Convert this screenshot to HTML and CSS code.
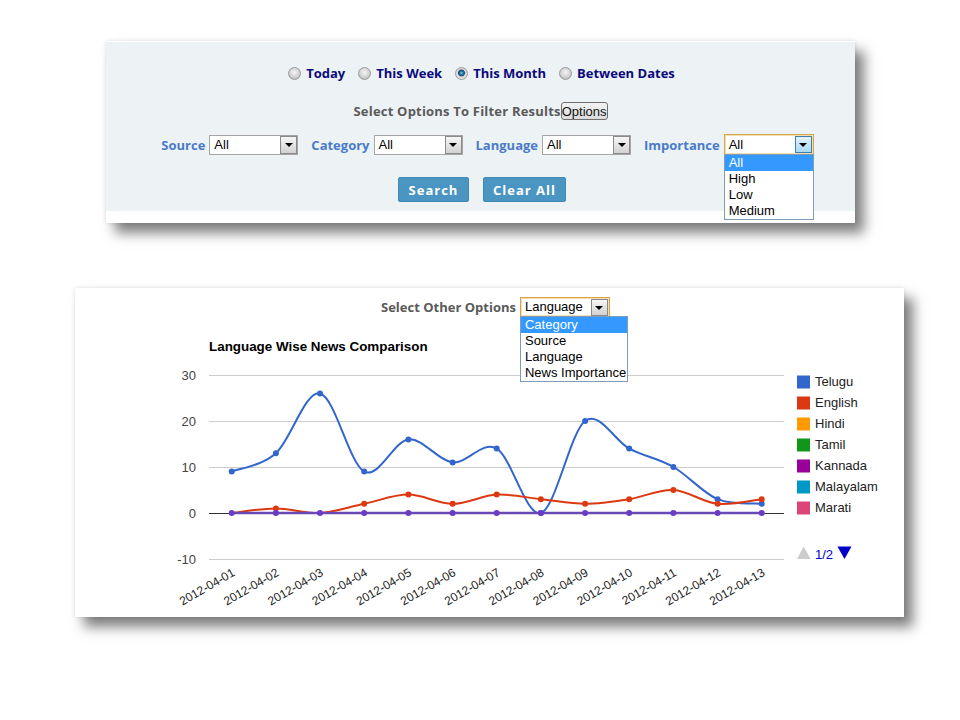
FILE: index.html
```html
<!DOCTYPE html>
<html>
<head>
<meta charset="utf-8">
<title>News Filter</title>
<link rel="stylesheet" href="styles.css">
</head>
<body>
<div class="page">
<div class="card filter-card">
  <div class="panel">
    <div class="radios">
      <span class="radio"></span><span class="rlabel">Today</span>
      <span class="radio"></span><span class="rlabel">This Week</span>
      <span class="radio checked"></span><span class="rlabel">This Month</span>
      <span class="radio"></span><span class="rlabel">Between Dates</span>
    </div>
    <div class="opt-row">
      <span class="opt-label">Select Options To Filter Results</span><button class="opt-btn">Options</button>
    </div>
    <div class="filters">
      <span class="flabel">Source</span>
      <div class="sel"><span class="val">All</span><span class="arr"></span></div>
      <span class="flabel">Category</span>
      <div class="sel"><span class="val">All</span><span class="arr"></span></div>
      <span class="flabel">Language</span>
      <div class="sel"><span class="val">All</span><span class="arr"></span></div>
      <span class="flabel">Importance</span>
      <div class="sel focus open"><span class="val">All</span><span class="arr"></span>
        <ul class="dd">
          <li class="hl">All</li>
          <li>High</li>
          <li>Low</li>
          <li>Medium</li>
        </ul>
      </div>
    </div>
    <div class="actions">
      <button class="btn btn-search">Search</button>
      <button class="btn btn-clear">Clear All</button>
    </div>
  </div>
</div>

<div class="card chart-card">
  <div class="head">
    <span class="head-label">Select Other Options</span>
    <div class="sel focus plain"><span class="val">Language</span><span class="arr"></span>
      <ul class="dd wide">
        <li class="hl">Category</li>
        <li>Source</li>
        <li>Language</li>
        <li>News Importance</li>
      </ul>
    </div>
  </div>
  <svg class="chart" width="829" height="300" viewBox="75 317 829 300" xmlns="http://www.w3.org/2000/svg">
    <text class="ttl" x="209" y="351">Language Wise News Comparison</text>
    <g stroke="#cccccc" stroke-width="1">
      <line x1="209" y1="375.5" x2="784" y2="375.5"/>
      <line x1="209" y1="421.5" x2="784" y2="421.5"/>
      <line x1="209" y1="467.5" x2="784" y2="467.5"/>
      <line x1="209" y1="559.5" x2="784" y2="559.5"/>
    </g>
    <line x1="209" y1="513.5" x2="784" y2="513.5" stroke="#333333" stroke-width="1"/>
    <g class="ylab" text-anchor="end">
      <text x="196" y="380">30</text>
      <text x="196" y="426">20</text>
      <text x="196" y="472">10</text>
      <text x="196" y="518">0</text>
      <text x="196" y="564">-10</text>
    </g>
    <path fill="none" stroke="#3366cc" stroke-width="2" d="M231.7,471.6 C239.1,468.5 261.2,466.2 275.9,453.2 C290.6,440.2 305.3,390.3 320.0,393.4 C334.7,396.5 349.5,463.9 364.2,471.6 C378.9,479.3 393.7,440.9 408.4,439.4 C423.1,437.9 437.9,460.9 452.6,462.4 C467.3,463.9 482.0,440.2 496.7,448.6 C511.4,457.0 526.2,517.6 540.9,513 C555.6,508.4 570.4,431.7 585.1,421 C599.8,410.3 614.5,440.9 629.2,448.6 C643.9,456.3 658.7,458.6 673.4,467 C688.1,475.4 702.9,493.1 717.6,499.2 C732.3,505.3 754.3,503.0 761.7,503.8"/>
    <g fill="#3366cc">
      <circle cx="231.7" cy="471.6" r="3"/><circle cx="275.9" cy="453.2" r="3"/><circle cx="320.0" cy="393.4" r="3"/><circle cx="364.2" cy="471.6" r="3"/><circle cx="408.4" cy="439.4" r="3"/><circle cx="452.6" cy="462.4" r="3"/><circle cx="496.7" cy="448.6" r="3"/><circle cx="540.9" cy="513" r="3"/><circle cx="585.1" cy="421" r="3"/><circle cx="629.2" cy="448.6" r="3"/><circle cx="673.4" cy="467" r="3"/><circle cx="717.6" cy="499.2" r="3"/><circle cx="761.7" cy="503.8" r="3"/>
    </g>
    <path fill="none" stroke="#dc3912" stroke-width="2" d="M231.7,513 C239.1,512.2 261.2,508.4 275.9,508.4 C290.6,508.4 305.3,513.8 320.0,513 C334.7,512.2 349.5,506.9 364.2,503.8 C378.9,500.7 393.7,494.6 408.4,494.6 C423.1,494.6 437.9,503.8 452.6,503.8 C467.3,503.8 482.0,495.4 496.7,494.6 C511.4,493.8 526.2,497.7 540.9,499.2 C555.6,500.7 570.4,503.8 585.1,503.8 C599.8,503.8 614.5,501.5 629.2,499.2 C643.9,496.9 658.7,489.2 673.4,490 C688.1,490.8 702.9,502.3 717.6,503.8 C732.3,505.3 754.3,500.0 761.7,499.2"/>
    <g fill="#dc3912">
      <circle cx="275.9" cy="508.4" r="3"/><circle cx="364.2" cy="503.8" r="3"/><circle cx="408.4" cy="494.6" r="3"/><circle cx="452.6" cy="503.8" r="3"/><circle cx="496.7" cy="494.6" r="3"/><circle cx="540.9" cy="499.2" r="3"/><circle cx="585.1" cy="503.8" r="3"/><circle cx="629.2" cy="499.2" r="3"/><circle cx="673.4" cy="490" r="3"/><circle cx="717.6" cy="503.8" r="3"/><circle cx="761.7" cy="499.2" r="3"/>
    </g>
    <line x1="231.7" y1="513" x2="761.7" y2="513" stroke="#6a48b6" stroke-width="2.5"/>
    <g fill="#6a3cc6">
      <circle cx="231.7" cy="513" r="3"/><circle cx="275.9" cy="513" r="3"/><circle cx="320.0" cy="513" r="3"/><circle cx="364.2" cy="513" r="3"/><circle cx="408.4" cy="513" r="3"/><circle cx="452.6" cy="513" r="3"/><circle cx="496.7" cy="513" r="3"/><circle cx="540.9" cy="513" r="3"/><circle cx="585.1" cy="513" r="3"/><circle cx="629.2" cy="513" r="3"/><circle cx="673.4" cy="513" r="3"/><circle cx="717.6" cy="513" r="3"/><circle cx="761.7" cy="513" r="3"/>
    </g>
    <g class="xlab" text-anchor="end">
      <text x="235.7" y="575" transform="rotate(-30 235.7 575)">2012-04-01</text>
      <text x="279.9" y="575" transform="rotate(-30 279.9 575)">2012-04-02</text>
      <text x="324.0" y="575" transform="rotate(-30 324.0 575)">2012-04-03</text>
      <text x="368.2" y="575" transform="rotate(-30 368.2 575)">2012-04-04</text>
      <text x="412.4" y="575" transform="rotate(-30 412.4 575)">2012-04-05</text>
      <text x="456.6" y="575" transform="rotate(-30 456.6 575)">2012-04-06</text>
      <text x="500.7" y="575" transform="rotate(-30 500.7 575)">2012-04-07</text>
      <text x="544.9" y="575" transform="rotate(-30 544.9 575)">2012-04-08</text>
      <text x="589.1" y="575" transform="rotate(-30 589.1 575)">2012-04-09</text>
      <text x="633.2" y="575" transform="rotate(-30 633.2 575)">2012-04-10</text>
      <text x="677.4" y="575" transform="rotate(-30 677.4 575)">2012-04-11</text>
      <text x="721.6" y="575" transform="rotate(-30 721.6 575)">2012-04-12</text>
      <text x="765.7" y="575" transform="rotate(-30 765.7 575)">2012-04-13</text>
    </g>
    <g class="legend">
      <rect x="797" y="375.5" width="13" height="13" fill="#3366cc"/><text x="815" y="386">Telugu</text>
      <rect x="797" y="396.5" width="13" height="13" fill="#dc3912"/><text x="815" y="407">English</text>
      <rect x="797" y="417.5" width="13" height="13" fill="#ff9900"/><text x="815" y="428">Hindi</text>
      <rect x="797" y="438.5" width="13" height="13" fill="#109618"/><text x="815" y="449">Tamil</text>
      <rect x="797" y="459.5" width="13" height="13" fill="#990099"/><text x="815" y="470">Kannada</text>
      <rect x="797" y="480.5" width="13" height="13" fill="#0099c6"/><text x="815" y="491">Malayalam</text>
      <rect x="797" y="501.5" width="13" height="13" fill="#dd4477"/><text x="815" y="512">Marati</text>
    </g>
    <polygon points="797,559 810.5,559 803.7,546.5" fill="#cccccc"/>
    <text class="pager" x="815" y="558.5">1/2</text>
    <polygon points="837.5,546.5 851.5,546.5 844.5,559" fill="#0000cc"/>
  </svg>
</div>
</div>
</body>
</html>
```

FILE: styles.css
```css
html,
body {
  margin: 0;
  background: #ffffff;
  font-family: "Liberation Sans", Arial, sans-serif;
}

.page {
  padding: 41px 0 80px;
  min-height: 720px;
  box-sizing: border-box;
}

.card {
  background: #ffffff;
  box-shadow: 9px 10px 12px rgba(0, 0, 0, 0.5), 0 0 4px rgba(0, 0, 0, 0.12);
}

/* ---------- top filter card ---------- */
.filter-card {
  width: 749px;
  margin-left: 106px;
  padding: 1px 0 12px 0;
}

.panel {
  background: #edf2f5;
  padding: 22px 0 9px;
}

.radios {
  display: flex;
  justify-content: center;
  align-items: center;
  height: 18px;
  padding-left: 2px;
}

.radio {
  width: 13px;
  height: 13px;
  box-sizing: border-box;
  border-radius: 50%;
  border: 1px solid #9a9a9a;
  background: radial-gradient(circle at 50% 40%, #f4f4f4 0, #d8d8d8 4px, #c4c4c4 6px);
  margin-right: 5px;
}

.radio.checked {
  background: radial-gradient(circle at 50% 45%, #8fd0f0 0, #2a7fae 1.5px, #0f4770 3px, #d2d2d2 3.8px, #e6e6e6 6px);
}

.rlabel {
  font-family: "Open Sans", "DejaVu Sans", sans-serif;
  font-weight: 700;
  font-size: 13px;
  line-height: 18px;
  color: #0a0a7c;
  margin-right: 13px;
}

.rlabel:last-child {
  margin-right: 0;
}

.opt-row {
  display: flex;
  justify-content: center;
  align-items: center;
  height: 18px;
  margin-top: 20px;
}

.opt-label {
  font-family: "Open Sans", "DejaVu Sans", sans-serif;
  font-weight: 700;
  font-size: 13px;
  line-height: 18px;
  letter-spacing: 0.2px;
  color: #5a5a5a;
}

.opt-btn {
  height: 18px;
  box-sizing: border-box;
  padding: 0;
  margin: 0;
  border: 1px solid #6f6f6f;
  border-radius: 3px;
  background: linear-gradient(#f2f2f2, #dcdcdc);
  font-family: "Liberation Sans", Arial, sans-serif;
  font-size: 13px;
  line-height: 15px;
  color: #111111;
}

.filters {
  display: flex;
  justify-content: center;
  align-items: center;
  height: 21px;
  margin-top: 14px;
  padding-left: 14px;
}

.flabel {
  font-family: "Open Sans", "DejaVu Sans", sans-serif;
  font-weight: 700;
  font-size: 13px;
  line-height: 18px;
  color: #4a7bc9;
  margin-right: 4px;
}

.sel {
  position: relative;
  width: 89px;
  height: 20px;
  box-sizing: border-box;
  border: 1px solid #a5a5a5;
  background: #ffffff;
  display: flex;
  align-items: center;
  margin-right: 13px;
  font-family: "Liberation Sans", Arial, sans-serif;
  font-size: 13px;
  color: #000000;
}

.sel .val {
  flex: 1;
  padding-left: 4px;
  line-height: 16px;
}

.sel .arr {
  width: 17px;
  height: 18px;
  box-sizing: border-box;
  border: 1px solid #8a8a8a;
  background: linear-gradient(#f6f6f6, #d2d2d2);
  display: flex;
  align-items: center;
  justify-content: center;
}

.sel .arr::after {
  content: "";
  width: 0;
  height: 0;
  border-left: 4px solid transparent;
  border-right: 4px solid transparent;
  border-top: 4px solid #000000;
  margin-top: 1px;
}

.sel.focus {
  width: 90px;
  border-color: #d9a54c;
  box-shadow: inset 0 0 0 1px #f3ddb3;
  margin-right: 0;
}

.filters .sel.focus {
  height: 21px;
}

.sel.focus .arr {
  height: 17px;
  margin-right: 1px;
  border-color: #3d7fb0;
  background: linear-gradient(#e3f3fd, #aad8f4);
}

.sel.focus.plain .arr {
  border-color: #8a8a8a;
  background: linear-gradient(#f6f6f6, #d2d2d2);
}

.dd {
  position: absolute;
  top: 100%;
  left: -1px;
  width: 90px;
  box-sizing: border-box;
  margin: 0;
  padding: 0;
  list-style: none;
  background: #ffffff;
  border: 1px solid #7f9db9;
  z-index: 5;
}

.dd li {
  height: 16px;
  line-height: 16px;
  padding-left: 4px;
  font-size: 13px;
  color: #000000;
  white-space: nowrap;
}

.dd li.hl {
  background: #3399ff;
  color: #ffffff;
}

.dd.wide {
  width: 108px;
}

.actions {
  display: flex;
  justify-content: center;
  gap: 14px;
  margin-top: 22px;
  padding-left: 3px;
}

.btn {
  height: 25px;
  box-sizing: border-box;
  margin: 0;
  padding: 0;
  border: 1px solid #3f89b4;
  border-radius: 2px;
  background: #4a95c1;
  color: #ffffff;
  font-family: "Open Sans", "DejaVu Sans", sans-serif;
  font-weight: 700;
  font-size: 13px;
  letter-spacing: 1px;
  line-height: 22px;
}

.btn-search {
  width: 71px;
}

.btn-clear {
  width: 83px;
}

/* ---------- chart card ---------- */
.chart-card {
  width: 829px;
  margin: 65px 0 0 75px;
  padding-top: 9px;
}

.head {
  display: flex;
  justify-content: center;
  align-items: center;
  height: 20px;
  padding-left: 12px;
}

.head-label {
  font-family: "Open Sans", "DejaVu Sans", sans-serif;
  font-weight: 700;
  font-size: 13px;
  line-height: 18px;
  color: #5a5a5a;
  margin-right: 4px;
}

.chart {
  display: block;
  font-family: "Liberation Sans", Arial, sans-serif;
}

.chart .ttl {
  font-size: 13.4px;
  font-weight: 700;
  fill: #000000;
}

.chart .ylab text {
  font-size: 13px;
  fill: #444444;
}

.chart .xlab text {
  font-size: 12px;
  fill: #222222;
}

.chart .legend text {
  font-size: 13px;
  fill: #222222;
}

.chart .pager {
  font-size: 13px;
  fill: #0000cc;
}
```
